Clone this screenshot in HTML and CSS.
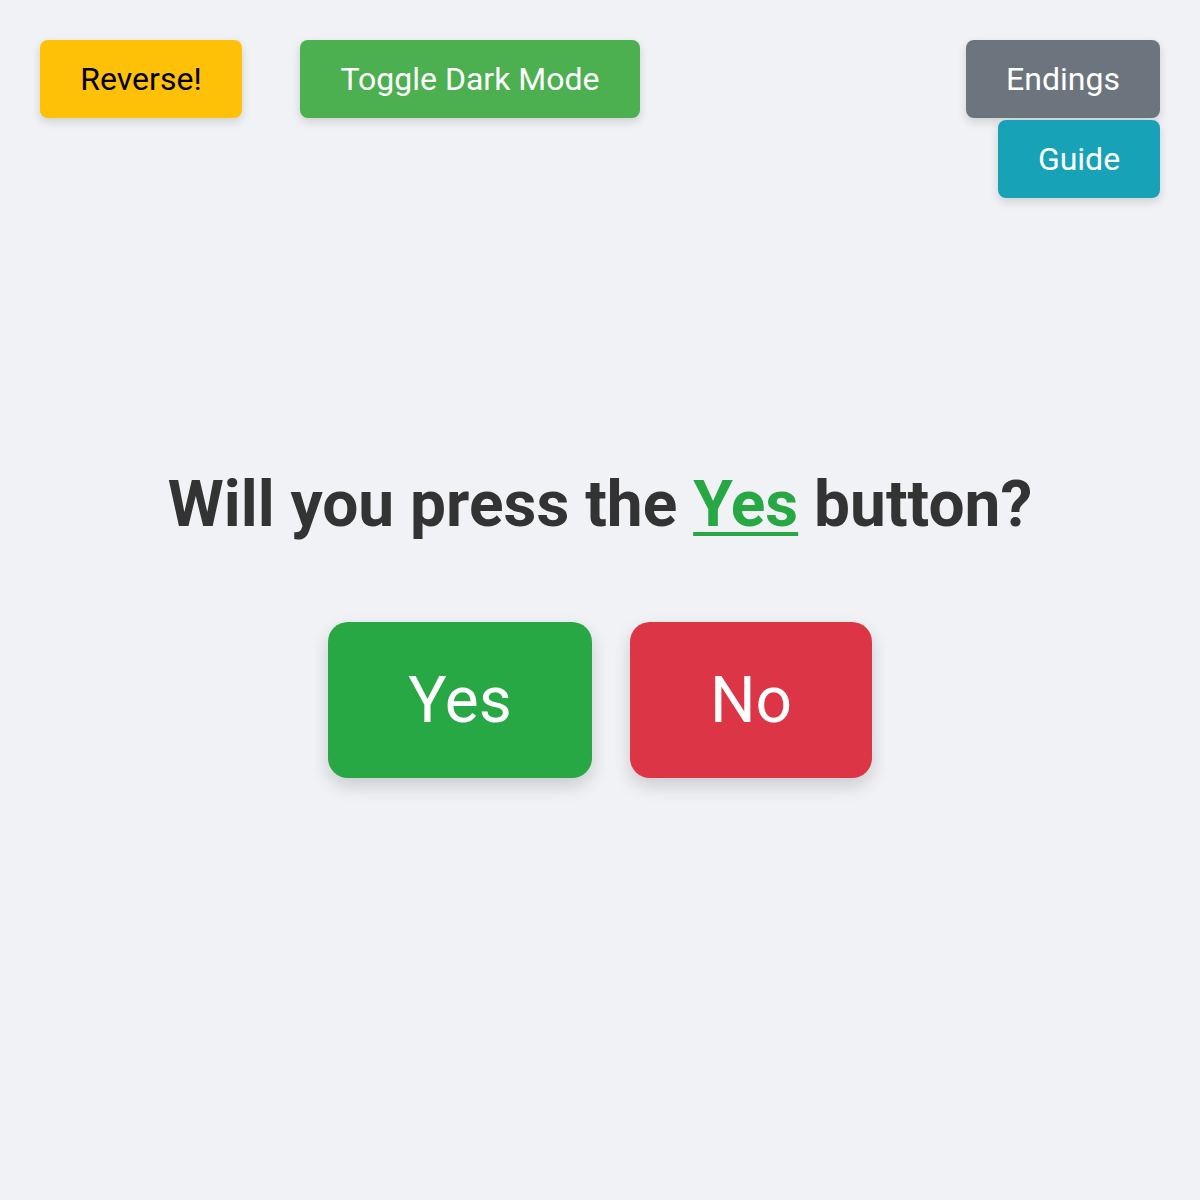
FILE: index.html
```html
<!DOCTYPE html>
<html lang="en">
<head>
<meta charset="utf-8">
<title>Will you press the Yes button?</title>
<link rel="stylesheet" href="styles.css">
</head>
<body>
<header class="top">
  <div class="left-group">
    <button class="btn btn-reverse">Reverse!</button>
    <button class="btn btn-toggle">Toggle Dark Mode</button>
  </div>
  <div class="right-group">
    <button class="btn btn-endings">Endings</button>
    <button class="btn btn-guide">Guide</button>
  </div>
</header>
<main class="main">
  <h1 class="question">Will you press the <span class="yes-word">Yes</span> button?</h1>
  <div class="choices">
    <button class="choice choice-yes">Yes</button>
    <button class="choice choice-no">No</button>
  </div>
</main>
</body>
</html>
```
FILE: styles.css
```css
html, body {
  margin: 0;
  padding: 0;
}
body {
  background: #f0f2f5;
  font-family: Roboto, "Liberation Sans", sans-serif;
  width: 1200px;
  height: 1200px;
  box-sizing: border-box;
  padding: 40px;
}
.top {
  display: flex;
  justify-content: space-between;
  align-items: flex-start;
}
.left-group {
  display: flex;
  gap: 58px;
}
.right-group {
  display: flex;
  flex-direction: column;
  align-items: flex-end;
  gap: 2px;
}
.btn {
  font-family: inherit;
  font-size: 32px;
  border: none;
  border-radius: 8px;
  height: 78px;
  padding: 0;
  box-shadow: 0 4px 10px rgba(0, 0, 0, 0.14);
  color: #fff;
  cursor: pointer;
}
.btn-reverse {
  background: #ffc107;
  color: #000;
  width: 202px;
}
.btn-toggle {
  background: #4caf50;
  width: 340px;
}
.btn-endings {
  background: #6c757d;
  width: 194px;
}
.btn-guide {
  background: #17a2b8;
  width: 162px;
}
.main {
  display: flex;
  flex-direction: column;
  align-items: center;
  margin-top: 269px;
}
.question {
  margin: 0;
  font-size: 64px;
  font-weight: 700;
  color: #333;
  line-height: 76px;
}
.yes-word {
  color: #28a745;
  text-decoration: underline;
  text-decoration-thickness: 4px;
  text-underline-offset: 6px;
}
.choices {
  display: flex;
  gap: 38px;
  margin-top: 79px;
}
.choice {
  font-family: inherit;
  font-size: 64px;
  color: #fff;
  border: none;
  border-radius: 20px;
  height: 156px;
  box-shadow: 0 8px 18px rgba(0, 0, 0, 0.16);
  cursor: pointer;
}
.choice-yes {
  background: #28a745;
  width: 264px;
}
.choice-no {
  background: #dc3545;
  width: 242px;
}
```
